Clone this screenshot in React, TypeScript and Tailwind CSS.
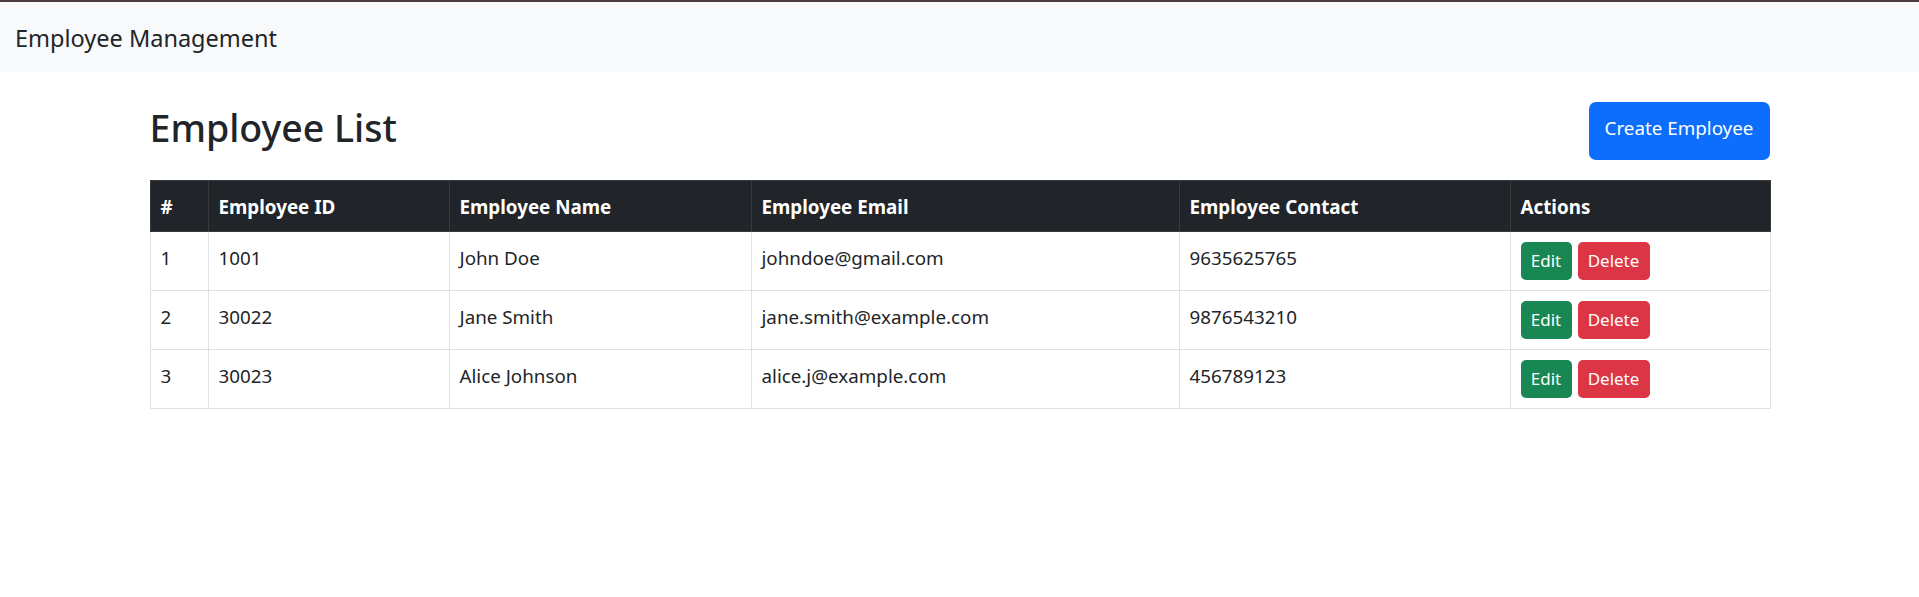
const employees = [
  { id: 1, empId: "1001", name: "John Doe", email: "johndoe@gmail.com", contact: "9635625765" },
  { id: 2, empId: "30022", name: "Jane Smith", email: "jane.smith@example.com", contact: "9876543210" },
  { id: 3, empId: "30023", name: "Alice Johnson", email: "alice.j@example.com", contact: "456789123" },
];

const cols = [
  { label: "#", w: "w-[58px]" },
  { label: "Employee ID", w: "w-[241px]" },
  { label: "Employee Name", w: "w-[302px]" },
  { label: "Employee Email", w: "w-[428px]" },
  { label: "Employee Contact", w: "w-[331px]" },
  { label: "Actions", w: "w-[260px]" },
];

const td = "border border-[#dee2e6] px-[10px] pt-[11px] pb-[9px] align-top";

export default function App() {
  return (
    <div className="min-h-[597px] bg-white font-['Segoe_UI','Noto_Sans',sans-serif] text-[#212529]">
      {/* top bar */}
      <div className="h-[2px] bg-[#4a3a3d]" />
      <nav className="flex h-[70px] items-center bg-[#f8f9fa] px-[15px] pt-[2px]">
        <span className="text-[23.5px] leading-[37px]">Employee Management</span>
      </nav>

      <div className="mx-auto mt-[30px] w-[1650px] px-[15px]">
        <div className="mb-[20px] flex h-[58px] items-stretch justify-between">
          <h1 className="pt-[2px] text-[37.5px] font-medium leading-[48px]">Employee List</h1>
          <button className="flex w-[181px] items-start justify-center rounded-[7px] bg-[#0d6efd] pt-[11px] text-[18.8px] leading-[30px] text-white">
            Create Employee
          </button>
        </div>

        <table className="w-full table-fixed border-collapse text-[18.8px] leading-[30px]">
          <thead>
            <tr className="bg-[#212529] text-white">
              {cols.map((c) => (
                <th
                  key={c.label}
                  className={`${c.w} border border-[#373b3e] px-[10px] pt-[11px] pb-[9px] text-left font-bold`}
                >
                  {c.label}
                </th>
              ))}
            </tr>
          </thead>
          <tbody>
            {employees.map((e) => (
              <tr key={e.id}>
                <td className={td}>{e.id}</td>
                <td className={td}>{e.empId}</td>
                <td className={td}>{e.name}</td>
                <td className={td}>{e.email}</td>
                <td className={td}>{e.contact}</td>
                <td className="border border-[#dee2e6] px-[10px] py-[10px] align-top">
                  <div className="flex gap-[6px]">
                    <button className="flex h-[38px] w-[51px] items-center justify-center rounded-[5px] bg-[#198754] text-[17px] text-white">
                      Edit
                    </button>
                    <button className="flex h-[38px] w-[72px] items-center justify-center rounded-[5px] bg-[#dc3545] text-[17px] text-white">
                      Delete
                    </button>
                  </div>
                </td>
              </tr>
            ))}
          </tbody>
        </table>
      </div>
    </div>
  );
}
